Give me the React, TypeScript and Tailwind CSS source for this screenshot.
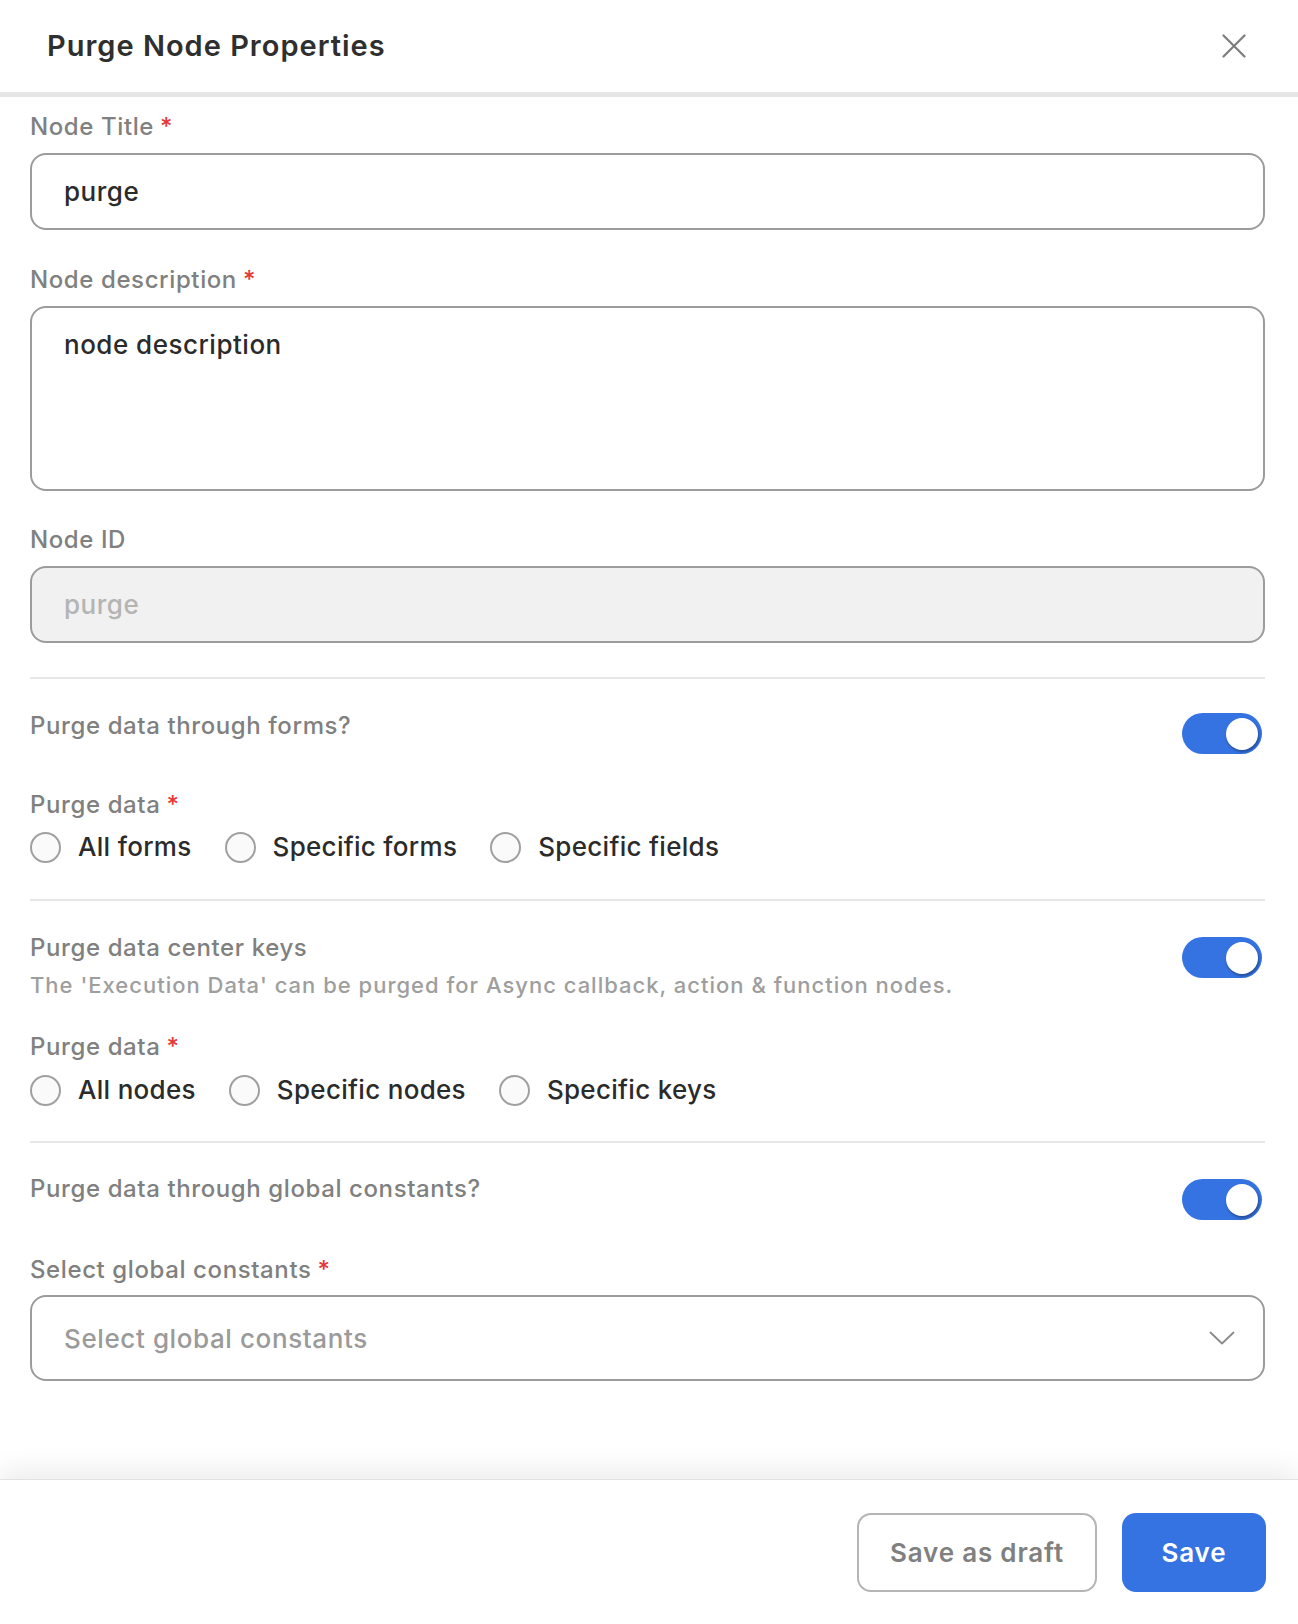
// ── Purge Node Properties panel ──
import React, { useState } from "react";

const font = { fontFamily: "Inter, 'Noto Sans', sans-serif" };

function Label({ text, required }: { text: string; required?: boolean }) {
  return (
    <div className="text-[24px] leading-[32px] font-medium tracking-[0.6px] text-[#808080]">
      {text}
      {required && <span className="text-[#e53935] ml-[6px]">*</span>}
    </div>
  );
}

function Toggle({ on, className }: { on: boolean; className?: string }) {
  return (
    <div className={`w-[80px] h-[41px] rounded-full flex items-center px-[4px] flex-shrink-0 ${on ? "bg-[#3573e3] justify-end" : "bg-[#cfcfcf] justify-start"} ${className || ""}`}>
      <div className="w-[32px] h-[32px] rounded-full bg-white shadow-[1px_2px_3px_rgba(0,0,0,0.35)]" />
    </div>
  );
}

function Radio({ label }: { label: string }) {
  return (
    <label className="flex items-center gap-[17px]">
      <span className="w-[31px] h-[31px] rounded-full border-2 border-[#a0a0a0] bg-[#fafafa] flex-shrink-0" />
      <span className="text-[26px] leading-[32px] font-medium tracking-[0.3px] text-[#2b2b2b]">{label}</span>
    </label>
  );
}

function Divider({ className }: { className?: string }) {
  return <div className={`h-[2px] bg-[#e6e6e6] ${className || ""}`} />;
}

export default function App() {
  const [title, setTitle] = useState("purge");
  const [desc, setDesc] = useState("node description");

  return (
    <div className="w-[1298px] h-[1624px] bg-white flex flex-col" style={font}>
      {/* Header */}
      <div className="h-[97px] flex items-center justify-between pl-[47px] pr-[52px] border-b-[5px] border-[#e6e6e6] flex-shrink-0">
        <h1 className="text-[29px] font-semibold text-[#2f2f2f] tracking-[1px]">Purge Node Properties</h1>
        <button className="w-[24px] h-[24px] text-[#7d7d7d]">
          <svg width="24" height="24" viewBox="0 0 24 24" fill="none" stroke="currentColor" strokeWidth="2.2" strokeLinecap="round">
            <path d="M1.5 1.5L22.5 22.5M22.5 1.5L1.5 22.5" />
          </svg>
        </button>
      </div>

      {/* Body */}
      <div className="flex-1 pl-[30px] pr-[33px] pt-[14px]">
        <Label text="Node Title" required />
        <input
          value={title}
          onChange={(e) => setTitle(e.target.value)}
          className="mt-[10px] w-full h-[77px] rounded-[16px] border-2 border-[#9c9c9c] px-[32px] text-[26px] font-medium tracking-[0.5px] text-[#2b2b2b] outline-none"
        />

        <div className="mt-[34px]">
          <Label text="Node description" required />
        </div>
        <textarea
          value={desc}
          onChange={(e) => setDesc(e.target.value)}
          className="mt-[10px] block w-full h-[185px] rounded-[16px] border-2 border-[#9c9c9c] px-[32px] pt-[17px] text-[26px] font-medium tracking-[0.5px] text-[#2b2b2b] outline-none resize-none"
        />

        <div className="mt-[33px]">
          <Label text="Node ID" />
        </div>
        <div className="mt-[10px] w-full h-[77px] rounded-[16px] border-2 border-[#9c9c9c] bg-[#f1f1f1] px-[32px] flex items-center text-[26px] font-medium tracking-[0.5px] text-[#b4b4b4]">
          purge
        </div>

        <Divider className="mt-[34px]" />

        {/* Forms */}
        <div className="mt-[31px] flex justify-between items-start">
          <Label text="Purge data through forms?" />
          <Toggle on className="mt-[3px] mr-[3px]" />
        </div>
        <div className="mt-[35px]">
          <Label text="Purge data" required />
        </div>
        <div className="mt-[10px] flex items-center gap-[33px]">
          <Radio label="All forms" />
          <Radio label="Specific forms" />
          <Radio label="Specific fields" />
        </div>

        <Divider className="mt-[36px]" />

        {/* Data center keys */}
        <div className="mt-[31px] flex justify-between items-start">
          <div>
            <Label text="Purge data center keys" />
            <div className="mt-[6px] text-[22px] leading-[30px] font-medium tracking-[1px] text-[#9e9e9e]">
              The 'Execution Data' can be purged for Async callback, action &amp; function nodes.
            </div>
          </div>
          <Toggle on className="mt-[5px] mr-[3px]" />
        </div>
        <div className="mt-[31px]">
          <Label text="Purge data" required />
        </div>
        <div className="mt-[11px] flex items-center gap-[33px]">
          <Radio label="All nodes" />
          <Radio label="Specific nodes" />
          <Radio label="Specific keys" />
        </div>

        <Divider className="mt-[35px]" />

        {/* Global constants */}
        <div className="mt-[30px] flex justify-between items-start">
          <Label text="Purge data through global constants?" />
          <Toggle on className="mt-[6px] mr-[3px]" />
        </div>
        <div className="mt-[34px]">
          <Label text="Select global constants" required />
        </div>
        <div className="mt-[9px] w-full h-[86px] rounded-[16px] border-2 border-[#9c9c9c] pl-[32px] pr-[28px] flex items-center justify-between">
          <span className="text-[26px] font-medium tracking-[0.6px] text-[#9a9a9a]">Select global constants</span>
          <svg width="26" height="14" viewBox="0 0 26 14" fill="none" stroke="#8a8a8a" strokeWidth="1.8" strokeLinecap="round" strokeLinejoin="round">
            <path d="M1.5 1.5L13 12.5L24.5 1.5" />
          </svg>
        </div>
      </div>

      {/* Footer */}
      <div className="h-[145px] flex-shrink-0 bg-white border-t border-[#e2e2e2] shadow-[0_-10px_24px_rgba(0,0,0,0.07)] flex justify-end items-start pt-[33px] pr-[32px] gap-[25px]">
        <button className="w-[240px] h-[79px] rounded-[14px] border-2 border-[#b5b5b5] text-[26px] font-semibold tracking-[0.8px] text-[#808080]">
          Save as draft
        </button>
        <button className="w-[144px] h-[79px] rounded-[14px] bg-[#3573e3] text-[26px] font-semibold tracking-[0.8px] text-white">
          Save
        </button>
      </div>
    </div>
  );
}
